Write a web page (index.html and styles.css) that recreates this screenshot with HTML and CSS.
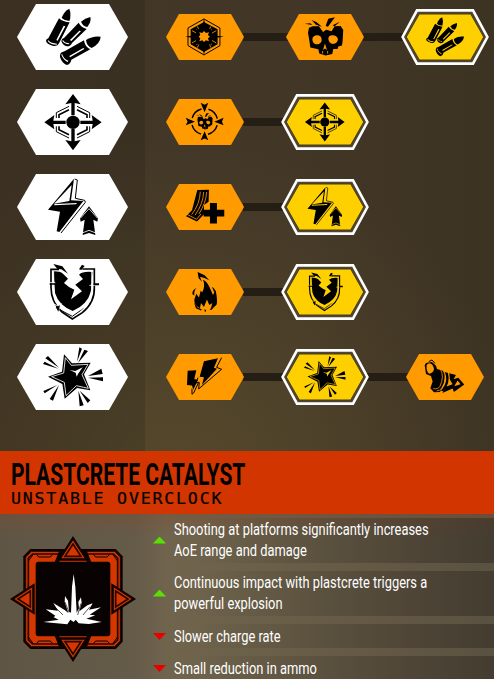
FILE: index.html
```html
<!DOCTYPE html>
<html lang="en">
<head>
<meta charset="utf-8">
<title>Weapon upgrades</title>
<link rel="stylesheet" href="styles.css">
</head>
<body>
<svg class="defs" aria-hidden="true">
  <symbol id="bullets" viewBox="127 21 180 180">
    <path d="M183 54Q190 33 206 26Q212 42 207 62Q194 64 183 54Z"/>
    <path d="M175 55Q187 66 207 67L175 130Q171 140 156 137Q138 132 136 123Q136 117 143 115Z"/>
    <path class="cut" d="M194 79L171 122L167 120L189 77ZM143 121Q151 131 169 131L168 134Q148 134 141 123Z"/>
    <path d="M241 65Q253 54 269 51Q273 63 260 81Q247 79 241 65Z"/>
    <path d="M234 68Q241 82 258 87L214 129Q209 140 198 139Q185 135 182 123Q183 115 190 114Z"/>
    <path class="cut" d="M241 93L212 123L208 120L236 92ZM187 120Q193 130 206 130L205 133Q191 132 185 123Z"/>
    <path d="M256 120Q276 107 300 110Q299 130 273 144Q258 138 256 120Z"/>
    <path d="M250 121Q252 140 269 148L212 179Q210 192 198 195Q184 190 178 171Q177 157 186 156L193 153Z"/>
    <path class="cut" d="M251 147L208 172L206 168L248 144ZM184 161Q189 178 203 182L202 186Q188 181 182 164Z"/>
  </symbol>

  <symbol id="spread" viewBox="127 276 180 180">
    <circle cx="217" cy="367" r="20"/>
    <g id="arrow">
      <path d="M217 282L240 313L222 309V346H212V309L194 313Z"/>
      <path class="line" d="M229 319L267 338V354"/>
      <path class="line thick" d="M229 329L259 344V354"/>
      <path class="line" d="M205 319L167 338V354"/>
      <path class="line thick" d="M205 329L175 344V354"/>
    </g>
    <use href="#arrow" transform="matrix(1 0 0 -1 0 733)"/>
    <path d="M131 367L161 345L158 362H195V372H158L161 388ZM303 367L273 345L276 362H239V372H276L273 388Z"/>
  </symbol>

  <symbol id="charge" viewBox="127 36 180 180">
    <path fill-rule="evenodd" d="M220 41L142 134L178 140L168 199L176 201L248 108L211 106ZM213 60L206 108L160 116Z"/>
    <path class="line" d="M222 42L230 45L224 100L252 106L254 112L181 204"/>
    <path class="cut" d="M162 117L229 114L226 118L160 121Z"/>
    <path d="M265 124L292 160L290 170L278 164L284 210L265 204L246 210L252 164L240 170L238 160Z"/>
    <path class="cutline" d="M239 160L265 131L291 160M247 203L265 196L283 203"/>
  </symbol>

  <symbol id="shield" viewBox="127 291 180 180">
    <path d="M159 319Q178 319 187 326L202 341L190 354L205 366L221 374L211 403L244 379L224 359L247 342L235 329Q247 318 275 321L271 379Q260 420 216 438Q174 421 163 384Z"/>
    <path class="shell" d="M175 313H151V367Q151 412 184 441L215 462L245 443Q283 412 281 367V312H245"/>
    <path class="cutline" d="M159 319V370Q162 412 190 432L215 446L242 431Q272 410 273 370V319"/>
    <path class="line" d="M181 436L215 454L249 430"/>
    <path class="cutline" d="M145 353L164 353M266 361L285 361M163 418L185 433M182 414L174 435M240 437L264 417"/>
    <path d="M158 297L185 304L202 326L182 313L170 312ZM235 313L244 299L252 303L242 315ZM279 355H295V361H279ZM147 355H165V359H147ZM165 426L178 421L173 440Z"/>
  </symbol>

  <symbol id="burst" viewBox="127 51 180 180">
    <path d="M190 73L214 100L270 98L250 133L269 181L229 174L192 206L185 162L142 140L184 125Z"/>
    <path class="cutline" d="M194 83L212 106L262 103L244 134L263 175L227 167L196 197L191 157L153 140L189 129Z"/>
    <path class="cut" d="M207 120L224 123L246 112L232 132L228 140L225 128Z"/>
    <path d="M236 52L244 56L229 95ZM251 59L262 63L232 99ZM134 85L142 78L175 113ZM127 102L132 95L173 116ZM302 116L306 132L262 138ZM262 143L308 142L308 154ZM128 183L170 165L132 190ZM147 207L175 165L157 212ZM233 182L249 226L237 229ZM237 182L269 211L261 219Z"/>
  </symbol>

  <symbol id="blastgrid" viewBox="88 49 125 125">
    <path class="line" d="M148 58L196 85V138L148 166L100 138V85Z"/>
    <path fill-rule="evenodd" d="M148 67L189 89V134L148 157L108 134V89ZM148 80L142 95L125 87L132 104L116 111L132 118L125 136L142 128L148 147L155 128L172 136L165 118L181 111L165 104L172 87L155 95Z"/>
    <path class="cutline" d="M112 93L126 101M128 80L134 92M169 80L163 92M185 93L171 101M112 130L126 122M128 144L134 132M169 144L163 132M185 130L171 122"/>
    <path fill-rule="evenodd" d="M148 54L153 87L170 88L173 106L208 111L173 116L170 134L153 136L148 168L143 136L126 134L123 116L92 111L123 106L126 88L143 87ZM148 94L143 100L134 98L137 106L132 111L137 116L134 125L143 122L148 127L154 122L163 125L160 116L166 111L160 106L163 98L154 100Z"/>
  </symbol>

  <symbol id="skull" viewBox="88 49 125 125">
    <path fill-rule="evenodd" d="M103 84L114 80L133 80L145 97L155 90L171 95L180 80L198 79L206 91L204 126L202 138L191 141L189 148L176 148L173 163L153 168L134 162L131 149L107 144L104 123L100 99ZM113 118Q113 130 123 134Q137 135 141 124Q142 108 129 107Q116 106 113 118ZM161 117Q163 131 175 133Q189 132 190 118Q186 107 175 107Q162 106 161 117ZM151 132L145 151L151 147L157 151Z"/>
    <path d="M90 72L107 71L113 76ZM111 61L126 68L142 81L124 75ZM161 57L181 53L171 66L160 81L153 79ZM196 66L180 80L174 77Z"/>
    <path class="cutline" d="M144 154V162M159 154V162"/>
  </symbol>

  <symbol id="skulltarget" viewBox="88 304 125 125">
    <circle class="ring" cx="150" cy="366" r="39"/>
    <path d="M138 309L150 315L161 309L150 338ZM138 422L150 417L161 422L150 395ZM93 354L121 366L93 377L99 366ZM207 354L179 366L207 377L202 366Z"/>
    <use href="#skull" x="123" y="338" width="54" height="54"/>
  </symbol>

  <symbol id="magazine" viewBox="88 64 125 125">
    <path d="M128 76L163 75L162 111L148 121V149L127 171L94 155L112 137Z"/>
    <path class="cutline" d="M137 81Q136 118 111 150M147 82Q146 117 121 152M156 82Q155 112 133 148M97 149L126 164L139 148"/>
    <path d="M166 115H187V135H209V156H187V177H166V156H147V135H166Z"/>
  </symbol>

  <symbol id="fire" viewBox="88 319 125 125">
    <path d="M145 345Q159 350 169 377L175 391L183 377Q190 408 185 421L169 432L173 415L164 421L157 405L148 427L139 415L136 431Q118 423 119 405L125 387L133 399L138 378L143 383Q153 363 145 345Z"/>
    <path d="M129 322L150 332L164 347L148 339L136 337L142 351L132 341ZM126 369Q117 378 119 393L113 388Q113 375 126 369ZM172 366Q185 374 183 389L177 379ZM118 414L129 429L142 435L139 438L124 431ZM186 404V419L170 436L165 435L181 419ZM149 433L155 438L151 443Z"/>
  </symbol>

  <symbol id="bolts" viewBox="88 79 125 125">
    <path d="M148 95L190 86L178 114L187 117L142 166L148 143L135 141Z"/>
    <path d="M99 123L125 122L119 148L130 151L116 180L112 168L97 166Z"/>
    <path class="line" d="M201 84L186 113L201 119L132 178L134 158M130 144L124 160L132 158L117 190L112 194V177"/>
  </symbol>

  <symbol id="blast" viewBox="808 79 125 125">
    <path fill-rule="evenodd" d="M810 107L814 100L832 97L844 108L847 118L865 123L872 132L868 160L856 187L838 188L827 176L834 156L829 139L814 133ZM816 107Q814 125 823 132Q836 131 838 119Q836 104 826 101Q818 101 816 107Z"/>
    <path class="cutline" d="M857 118Q870 140 856 170Q850 180 836 177M865 121Q880 145 862 175Q855 184 846 184"/>
    <path fill-rule="evenodd" d="M871 127Q879 148 870 167L859 184L866 185Q888 160 880 130ZM884 131L904 136L897 149L911 144L929 165L898 187L894 177L863 190L876 171L894 164L886 150ZM909 153L899 170L918 164Z"/>
    <path class="line" d="M822 96L832 91L841 101"/>
  </symbol>

  <symbol id="hex" viewBox="0 0 88 56">
    <path d="M18 5H70L83 28L70 51H18L5 28Z"/>
  </symbol>
  <symbol id="hex-on" viewBox="0 0 88 56">
    <path class="halo" d="M16 1.4H72L86.4 28L72 54.6H16L1.6 28Z"/>
    <path class="core" d="M18.3 5H69.7L82.7 28L69.7 51H18.3L5.3 28Z"/>
  </symbol>
</svg>

<main class="panel">
  <section class="tree">
    <div class="tier">
      <div class="badge"><svg><use href="#bullets"/></svg></div>
      <div class="path">
        <div class="node"><svg class="shape"><use href="#hex"/></svg><svg class="icon"><use href="#blastgrid"/></svg></div>
        <div class="node"><svg class="shape"><use href="#hex"/></svg><svg class="icon"><use href="#skull"/></svg></div>
        <div class="node on"><svg class="shape"><use href="#hex-on"/></svg><svg class="icon"><use href="#bullets"/></svg></div>
      </div>
    </div>
    <div class="tier">
      <div class="badge"><svg><use href="#spread"/></svg></div>
      <div class="path">
        <div class="node"><svg class="shape"><use href="#hex"/></svg><svg class="icon"><use href="#skulltarget"/></svg></div>
        <div class="node on"><svg class="shape"><use href="#hex-on"/></svg><svg class="icon"><use href="#spread"/></svg></div>
      </div>
    </div>
    <div class="tier">
      <div class="badge"><svg><use href="#charge"/></svg></div>
      <div class="path">
        <div class="node"><svg class="shape"><use href="#hex"/></svg><svg class="icon"><use href="#magazine"/></svg></div>
        <div class="node on"><svg class="shape"><use href="#hex-on"/></svg><svg class="icon"><use href="#charge"/></svg></div>
      </div>
    </div>
    <div class="tier">
      <div class="badge"><svg><use href="#shield"/></svg></div>
      <div class="path">
        <div class="node"><svg class="shape"><use href="#hex"/></svg><svg class="icon"><use href="#fire"/></svg></div>
        <div class="node on"><svg class="shape"><use href="#hex-on"/></svg><svg class="icon"><use href="#shield"/></svg></div>
      </div>
    </div>
    <div class="tier">
      <div class="badge"><svg><use href="#burst"/></svg></div>
      <div class="path">
        <div class="node"><svg class="shape"><use href="#hex"/></svg><svg class="icon"><use href="#bolts"/></svg></div>
        <div class="node on"><svg class="shape"><use href="#hex-on"/></svg><svg class="icon"><use href="#burst"/></svg></div>
        <div class="node"><svg class="shape"><use href="#hex"/></svg><svg class="icon"><use href="#blast"/></svg></div>
      </div>
    </div>
  </section>

  <header class="title">
    <h1>PLASTCRETE CATALYST</h1>
    <h2>UNSTABLE OVERCLOCK</h2>
  </header>

  <section class="overclock">
    <svg class="emblem" viewBox="24 27 390 390">
      <path class="ink" d="M91 72H347L368 94V350L347 372H91L70 350V94Z"/>
      <path class="edge" d="M94 79H344L361 96V348L344 365H94L77 348V96Z"/>
      <path class="red" d="M98 87H340L353 99V345L340 357H98L85 345V99Z"/>
      <g id="trim">
        <path class="thin" d="M110 88L116 96H151L158 88M280 88L287 96H322L328 88M85 108L100 88M353 108L338 88"/>
        <path class="ink" d="M177 79L190 79L177 112H164ZM261 79H248L261 112H274Z"/>
      </g>
      <use href="#trim" transform="matrix(1 0 0 -1 0 444)"/>
      <rect class="ink" x="107" y="110" width="224" height="224" rx="9"/>
      <g id="point">
        <path class="ink" d="M219 33L266 107H172Z"/>
        <path class="edge" d="M219 44L256 101H182Z"/>
        <path class="red" d="M219 57L243 94H195Z"/>
      </g>
      <use href="#point" transform="rotate(90 219 222)"/>
      <use href="#point" transform="rotate(180 219 222)"/>
      <use href="#point" transform="rotate(270 219 222)"/>
      <path class="flash" d="M221 147L226 185L230 263L237 250L235 231L243 217L245 234L238 259L262 241L278 235L267 254L303 247L269 269L286 271L259 281L305 291L266 297L236 295L227 284L221 291L211 284L202 298L130 291L176 284L161 277L166 272L137 253L174 257L160 234L195 256L205 264L194 231L195 213L204 227L207 260L213 263L216 185Z"/>
      <path class="crack" d="M165 246L189 270M195 231L207 262M243 235L233 270M270 245L249 270"/>
    </svg>
    <ul class="effects">
      <li class="up"><p><span>Shooting at platforms significantly increases</span><span>AoE range and damage</span></p></li>
      <li class="up"><p><span>Continuous impact with plastcrete triggers a</span><span>powerful explosion</span></p></li>
      <li class="down"><p><span>Slower charge rate</span></p></li>
      <li class="down"><p><span>Small reduction in ammo</span></p></li>
    </ul>
  </section>
</main>
</body>
</html>
```
FILE: styles.css
```css
* { box-sizing: border-box; margin: 0; padding: 0; }

body {
  width: 494px;
  height: 679px;
  overflow: hidden;
  background: #42372a;
  font-family: Roboto, sans-serif;
}

.defs { position: absolute; width: 0; height: 0; }
.panel { display: flex; flex-direction: column; height: 679px; }

/* Upgrade tree */
.tree {
  height: 451px;
  background:
    linear-gradient(90deg, rgba(0, 0, 0, .12) 145px, transparent 145px),
    radial-gradient(circle at 180px 480px, rgba(96, 82, 46, .65), transparent 340px),
    linear-gradient(90deg, #433727, #423727 60%, #3d3323);
}
.tier { display: flex; height: 85px; padding-top: 4px; }
.badge {
  --plate: #fff;
  display: flex;
  align-items: center;
  justify-content: center;
  width: 111px;
  height: 66px;
  margin-left: 17px;
  background: #fff;
  clip-path: polygon(19px 0, 92px 0, 100% 50%, 92px 100%, 19px 100%, 0 50%);
}
.badge svg { width: 60px; height: 60px; }

.path { display: flex; gap: 32px; margin-left: 33px; height: 66px; align-items: center; isolation: isolate; }
.node {
  --plate: #ff9a00;
  position: relative;
  display: grid;
  place-items: center;
  width: 88px;
  height: 56px;
}
.node > svg { grid-area: 1 / 1; }
.node + .node::before {
  content: "";
  position: absolute;
  z-index: -1;
  left: -38px;
  top: 24px;
  width: 46px;
  height: 8px;
  background: #241e15;
}
.node.on { --plate: #ffd000; }
.shape { width: 88px; height: 56px; fill: var(--plate); }
.halo { fill: #50452f; stroke: #fff; stroke-width: 2.6; }
.core { fill: #ffd000; stroke: #493d24; stroke-width: 1; }
.icon { width: 41.6px; height: 41.6px; fill: #000; }

.cut { fill: var(--plate); }
.line { fill: none; stroke: #000; stroke-width: 3; }
.thick { stroke-width: 5; }
.cutline { fill: none; stroke: var(--plate); stroke-width: 2.5; }
.shell { fill: none; stroke: #000; stroke-width: 5; }
.ring { fill: none; stroke: #000; stroke-width: 4.5; stroke-dasharray: 40 21.26; stroke-dashoffset: -10.6; }

/* Overclock heading */
.title { height: 63px; padding: 7px 0 0 11px; background: #d23500; color: #000; white-space: nowrap; }
.title h1 {
  width: max-content;
  font-size: 31px;
  line-height: 33px;
  font-weight: 700;
  transform: scaleX(.678);
  transform-origin: 0 0;
}
.title h2 {
  font: 400 16.6px/15px "DejaVu Sans Mono", monospace;
  letter-spacing: 1.8px;
  -webkit-text-stroke: .2px #000;
}

/* Overclock effects */
.overclock {
  display: flex;
  height: 165px;
  background:
    linear-gradient(rgba(126, 75, 50, .4), transparent 22px),
    linear-gradient(90deg, #5f5544, #655b49 135px, #70644d 165px, #6b6049 260px, #5a5140);
}
.emblem { flex: none; width: 130px; height: 130px; margin: 20px 7px 0 8px; }
.ink { fill: #080202; }
.edge { fill: #d43700; stroke: #260700; stroke-width: 3; }
.red { fill: #d43700; stroke: #260700; stroke-width: 5; }
.thin { fill: none; stroke: #080202; stroke-width: 3; }
.crack { fill: none; stroke: #080202; stroke-width: 2; }
.flash { fill: #fff; }

.effects { display: flex; flex: 1; flex-direction: column; gap: 8px; padding-top: 4px; list-style: none; }
.effects li {
  display: flex;
  flex: none;
  align-items: center;
  gap: 8px;
  padding: 1px 0 2px 8px;
  background: linear-gradient(90deg, transparent 50px, rgba(45, 38, 31, .5));
}
.effects li::before { content: ""; width: 13px; height: 7px; }
.up::before { background: #5ae000; clip-path: polygon(50% 0, 100% 100%, 0 100%); }
.down::before { background: #e80000; clip-path: polygon(0 0, 100% 0, 50% 100%); }
.effects .down { padding: 2px 0 1px 8px; }
.effects p { color: #fff; font-size: 16.8px; line-height: 21px; white-space: nowrap; }
.effects span { display: block; width: max-content; transform: scaleX(.767); transform-origin: 0 0; }
```
